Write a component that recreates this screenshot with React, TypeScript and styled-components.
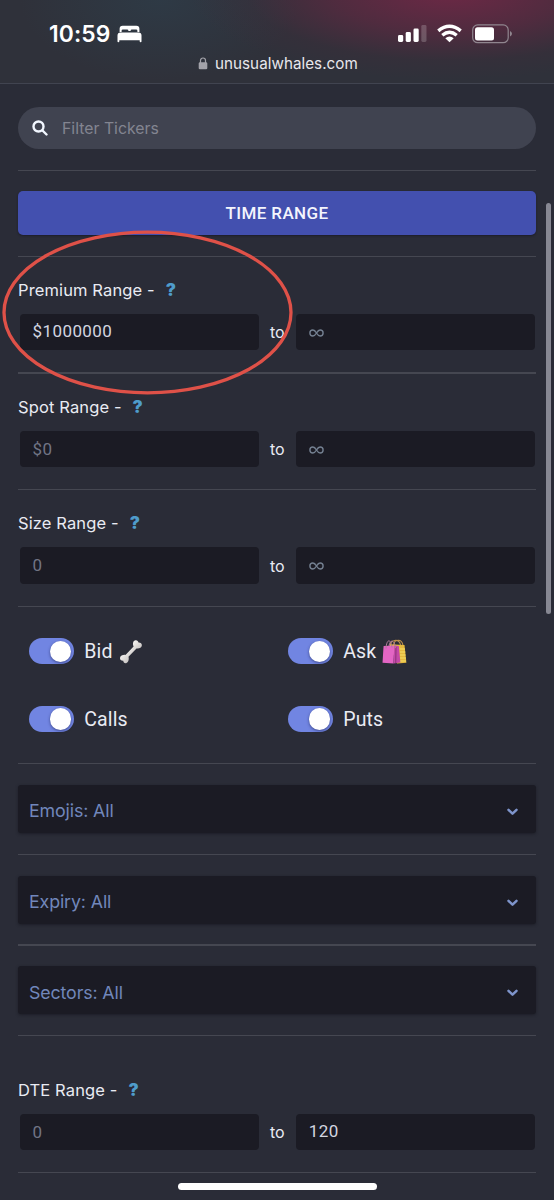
import React from "react";
import styled, { createGlobalStyle } from "styled-components";

const Global = createGlobalStyle`
  * { box-sizing: border-box; }
  body { margin: 0; background: #2a2c37; }
`;

const Screen = styled.div`
  position: relative;
  width: 554px;
  height: 1200px;
  overflow: hidden;
  background: #2a2c37;
  color: #e9ebf3;
  font-family: Inter, "Liberation Sans", sans-serif;
`;

const Header = styled.header`
  height: 84px;
  border-bottom: 1px solid #414450;
  background:
    radial-gradient(ellipse 260px 88px at 450px -8px, rgba(112, 40, 70, 0.95), rgba(100, 40, 66, 0.62) 45%, rgba(72, 42, 58, 0.22) 78%, rgba(60, 42, 54, 0) 100%),
    radial-gradient(ellipse 140px 80px at 160px 0, rgba(46, 60, 72, 0.8), rgba(46, 60, 72, 0) 100%),
    #2f313a;
`;

const StatusBar = styled.div`
  display: flex;
  align-items: center;
  height: 50px;
  padding: 17px 41px 0 49px;
`;

const Clock = styled.span`
  width: 62px;
  font-size: 22.8px;
  font-weight: 600;
  line-height: 33px;
  letter-spacing: 0.1px;
  white-space: nowrap;
  color: #fff;
`;

const BedIcon = styled.svg`
  margin: 0 auto 0 6px;
`;

const SignalIcon = styled.svg`
  margin-right: 10px;
`;

const WifiIcon = styled.svg`
  margin-right: 10px;
`;

const AddressBar = styled.div`
  display: flex;
  align-items: center;
  height: 27px;
  padding-left: 198px;
  gap: 7px;
`;

const Address = styled.span`
  font-size: 15.2px;
  letter-spacing: 0.04px;
  color: #e8e7ec;
`;

const Page = styled.main`
  padding: 23px 18px 0;
`;

const Search = styled.div`
  display: flex;
  align-items: center;
  gap: 14px;
  height: 42px;
  padding-left: 14px;
  border-radius: 21px;
  background: #404350;
`;

const Placeholder = styled.span`
  font-size: 15.8px;
  letter-spacing: 0.01px;
  color: #838590;
`;

const Divider = styled.hr<{ $top: number; $bottom: number }>`
  height: 1.5px;
  margin: ${(p) => p.$top}px 0 ${(p) => p.$bottom}px;
  border: 0;
  background: #454751;
`;

const TimeButton = styled.button`
  display: block;
  width: 100%;
  height: 44px;
  padding: 0;
  border: 0;
  border-radius: 5px;
  background: #4350af;
  box-shadow: 0 1px 2px rgba(15, 16, 30, 0.5);
  color: #f4f5fd;
  font: 500 17px/42px Roboto, sans-serif;
  letter-spacing: 0.4px;
`;

const RangeGroup = styled.section`
  height: 93px;
`;

const RangeLabel = styled.div`
  display: flex;
  align-items: center;
  height: 24px;
  font-size: 16.5px;
  letter-spacing: 0.12px;
  white-space: nowrap;
`;

const Help = styled.span`
  margin-left: 11px;
  color: #4f9ccb;
  font: 900 17px/24px Inter, sans-serif;
`;

const RangeRow = styled.div`
  display: flex;
  align-items: center;
  margin: 12px 1px 0 1.5px;
`;

const Field = styled.div<{ $muted?: boolean }>`
  flex: 1;
  height: 36.5px;
  padding-left: 13px;
  border-radius: 4px;
  background: #1b1b24;
  color: ${(p) => (p.$muted ? "#717484" : "#d3d6e0")};
  font: 400 17px/${(p) => (p.$muted ? 37 : 35)}px Roboto, sans-serif;
  letter-spacing: 0.42px;
`;

const InfinityIcon = styled.svg`
  display: block;
  margin-top: 14px;
`;

const To = styled.span`
  width: 37px;
  text-align: center;
  font-size: 16px;
  line-height: 36px;
`;

const Switches = styled.section`
  display: grid;
  grid-template-columns: 259px 259px;
  grid-auto-rows: 67.5px;
  height: 135px;
`;

const SwitchRow = styled.div`
  display: flex;
  align-items: center;
  padding-left: 10.5px;
`;

const Track = styled.span`
  display: flex;
  align-items: center;
  justify-content: flex-end;
  width: 45.5px;
  height: 26px;
  padding-right: 3px;
  border-radius: 13px;
  background: #7185e2;
`;

const Thumb = styled.span`
  width: 21.5px;
  height: 21.5px;
  border-radius: 50%;
  background: #fff;
  box-shadow: 0 1px 3px rgba(20, 24, 70, 0.55);
`;

const SwitchLabel = styled.span`
  padding-top: 2px;
  margin: 0 6px 0 10.3px;
  font: 400 19.5px/26px Roboto, sans-serif;
  letter-spacing: 0.1px;
`;

const Select = styled.div`
  display: flex;
  align-items: center;
  justify-content: space-between;
  height: 48px;
  padding: 4px 17px 0 11px;
  border-radius: 3px;
  background: #1b1b24;
  box-shadow: 0 1px 3px rgba(20, 20, 28, 0.6);
  color: #7187bb;
  font-size: 17.8px;
  letter-spacing: -0.12px;
`;

const Chevron = styled.svg`
  margin-top: 2px;
`;

const Scrollbar = styled.div`
  position: absolute;
  left: 546px;
  top: 203px;
  width: 4.5px;
  height: 411px;
  border-radius: 3px;
  background: #878893;
`;

const HomeIndicator = styled.div`
  position: absolute;
  left: 178px;
  top: 1183px;
  width: 199px;
  height: 7px;
  border-radius: 4px;
  background: #fff;
`;

const Highlight = styled.svg`
  position: absolute;
  left: 0;
  top: 225px;
`;

type RangeProps = { label: string; from: string; to?: string; filled?: boolean };

function Range({ label, from, to, filled }: RangeProps) {
  return (
    <RangeGroup>
      <RangeLabel>
        {label} Range -<Help>?</Help>
      </RangeLabel>
      <RangeRow>
        <Field $muted={!filled}>{from}</Field>
        <To>to</To>
        <Field>
          {to ?? (
            <InfinityIcon width="15" height="10" viewBox="0 0 15 10" fill="none" stroke="#748091" strokeWidth="1.4">
              <path d="M7.5 5C6.3 3 5.4 2 3.9 2a3 3 0 0 0 0 6C5.4 8 6.3 7 7.5 5s2.1-3 3.6-3a3 3 0 0 1 0 6C9.6 8 8.7 7 7.5 5Z" />
            </InfinityIcon>
          )}
        </Field>
      </RangeRow>
    </RangeGroup>
  );
}

function Switch({ label, children }: { label: string; children?: React.ReactNode }) {
  return (
    <SwitchRow>
      <Track>
        <Thumb />
      </Track>
      <SwitchLabel>{label}</SwitchLabel>
      {children}
    </SwitchRow>
  );
}

function Bone() {
  return (
    <svg width="24" height="25" viewBox="0 0 24 25">
      <defs>
        <linearGradient id="bone" x1="0" y1="0" x2="1" y2="1">
          <stop offset="0.35" stopColor="#f3f1ef" />
          <stop offset="0.8" stopColor="#b5b1ae" />
        </linearGradient>
      </defs>
      <path
        fill="url(#bone)"
        d="M14.6 7.5C13.4 4.600 14 1.500 16.600 1.200 18.200 1 19.300 2 19.500 3.500 21.500 3.400 23 4.600 22.900 6.300 22.700 8.900 20 9.900 17.500 9.500L9.500 17.800C10.200 20.500 9.400 23.600 7.100 24.200 5.400 24.500 4.300 23.400 4.300 21.800 2.400 22 .9 21 1 19.100 1.200 16.700 4.100 15.600 6.500 15.900Z"
      />
    </svg>
  );
}

function Bags() {
  return (
    <svg width="25" height="25" viewBox="0 0 25 25">
      <path d="M8 7.500C8 .5 17-1 18.500 6M11.500 7C12-.5 20-.5 21 6.500" fill="none" stroke="#bd914c" strokeWidth="1.100" />
      <path d="M7.500 5.200 22.500 6 24.400 23.800 15 24.500Z" fill="#e5b93f" />
      <path d="M17.500 10h5.500M17.700 13h5.600M18 16h5.600M18 19h6M18 22h6" stroke="#f5df68" strokeWidth="1.100" />
      <path d="M1.600 7 12.300 6.500 11.500 24.600.5 23.700Z" fill="#e365c4" />
      <path d="m12.300 6.500 4.500.6 1.600 16.400-6.900 1.100Z" fill="#c348a8" />
      <path d="m14 8-.3 15.900" stroke="#96377f" strokeWidth="1.200" />
      <path d="M4 9.500C4.500-.5 9-.5 10 8.500M7 7C8 .2 12.500.2 13.500 9" fill="none" stroke="#b17c9b" strokeWidth="1" />
    </svg>
  );
}

function Dropdown({ label }: { label: string }) {
  return (
    <Select>
      <span>{label}: All</span>
      <Chevron width="13" height="10" viewBox="0 0 13 10" fill="none" stroke="#7e94cb" strokeWidth="2.5" strokeLinecap="round" strokeLinejoin="round">
        <path d="m2.500 2.800 4 3.900 4-3.900" />
      </Chevron>
    </Select>
  );
}

export default function App() {
  return (
    <Screen>
      <Global />
      <Header>
        <StatusBar>
          <Clock>10:59</Clock>
          <BedIcon width="25" height="18" viewBox="0 0 25 18" fill="#fff">
            <path d="M2.600 7V3.800Q2.600.8 5.600.8h13.800Q22.400.8 22.400 3.800V7H20.400V5.700Q20.400 4.400 19.100 4.400h-4.200Q13.600 4.400 13.600 5.700V6H11.400V5.700Q11.400 4.400 10.100 4.400H5.900Q4.600 4.400 4.600 5.700V7Z" />
            <path d="M3.500 7.600h18Q24.500 7.600 24.500 10.600V16.500Q24.500 17.300 23.600 17.300T22.700 16.500V15.300H2.300v1.200q0 .8-.9.800T.5 16.500V10.600Q.5 7.600 3.500 7.600Z" />
          </BedIcon>
          <SignalIcon width="29" height="19" viewBox="0 0 29 19" fill="#fff">
            <rect x="0" y="11" width="5.200" height="7" rx="1.400" />
            <rect x="7.700" y="8" width="5.200" height="10" rx="1.400" />
            <rect x="15.500" y="4.500" width="5.200" height="13.500" rx="1.400" />
            <rect x="23.300" y="1" width="5.200" height="17" rx="1.400" opacity="0.2" />
          </SignalIcon>
          <WifiIcon width="25" height="19" viewBox="0 0 25 19" fill="none" stroke="#fff" strokeWidth="3.400">
            <path d="M1.300 6.900Q12.500-2.400 23.700 6.900" />
            <path d="M5.300 11.200Q12.500 5.200 19.700 11.200" />
            <path d="M8.300 14.200Q12.500 10.700 16.700 14.200L12.500 18.300Z" fill="#fff" stroke="none" />
          </WifiIcon>
          <svg width="41" height="20" viewBox="0 0 41 20">
            <rect x="0.700" y="0.900" width="35.500" height="17.800" rx="5" fill="none" stroke="#90868f" strokeWidth="1.200" />
            <rect x="3" y="3.200" width="19" height="13.200" rx="2.500" fill="#fff" />
            <path d="M38 7v5.500Q40 11.500 40 9.800T38 7Z" fill="#90868f" />
          </svg>
        </StatusBar>
        <AddressBar>
          <svg width="10" height="13" viewBox="0 0 10 13">
            <rect x="0.700" y="5.300" width="8.600" height="7" rx="1.300" fill="#a3a3aa" />
            <path d="M2.500 6V3.500a2.500 2.500 0 0 1 5 0V6" fill="none" stroke="#a3a3aa" strokeWidth="1.200" />
          </svg>
          <Address>unusualwhales.com</Address>
        </AddressBar>
      </Header>

      <Page>
        <Search>
          <svg width="16" height="16" viewBox="0 0 16 16" fill="none" stroke="#f2f7ff" strokeWidth="2.400" strokeLinecap="round">
            <circle cx="6.500" cy="6.500" r="5" />
            <path d="m10.500 10.500 4 4" />
          </svg>
          <Placeholder>Filter Tickers</Placeholder>
        </Search>
        <Divider $top={20.5} $bottom={20.3} />
        <TimeButton>TIME RANGE</TimeButton>
        <Divider $top={20.5} $bottom={20.6} />
        <Range label="Premium" from="$1000000" filled />
        <Divider $top={1.4} $bottom={21} />
        <Range label="Spot" from="$0" />
        <Divider $top={1.2} $bottom={21} />
        <Range label="Size" from="0" />
        <Divider $top={1.2} $bottom={10.4} />
        <Switches>
          <Switch label="Bid">
            <Bone />
          </Switch>
          <Switch label="Ask">
            <Bags />
          </Switch>
          <Switch label="Calls" />
          <Switch label="Puts" />
        </Switches>
        <Divider $top={10.3} $bottom={20.5} />
        <Dropdown label="Emojis" />
        <Divider $top={20.7} $bottom={20.5} />
        <Dropdown label="Expiry" />
        <Divider $top={20.7} $bottom={20.5} />
        <Dropdown label="Sectors" />
        <Divider $top={20.7} $bottom={41.2} />
        <Range label="DTE" from="0" to="120" />
        <Divider $top={1.2} $bottom={0} />
      </Page>
      <Scrollbar />
      <Highlight width="300" height="175" viewBox="0 0 300 175" fill="none" stroke="#df5148" strokeWidth="3.300">
        <ellipse cx="147.500" cy="87.500" rx="143.500" ry="80.300" />
      </Highlight>
      <HomeIndicator />
    </Screen>
  );
}
